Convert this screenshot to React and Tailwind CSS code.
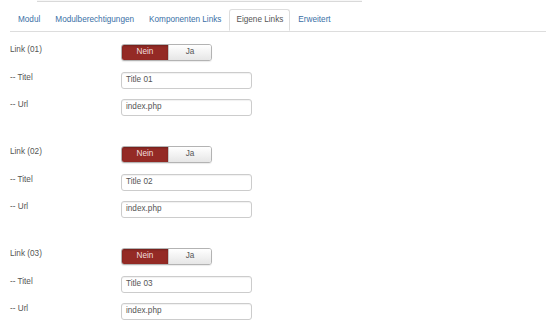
import React from "react";

const tabs = ["Modul", "Modulberechtigungen", "Komponenten Links", "Eigene Links", "Erweitert"];

function Toggle() {
  return (
    <div className="flex h-[17px] w-[91px] rounded-[3px] overflow-hidden border border-[#b3b3b3] shadow-[0_1px_1px_rgba(0,0,0,0.08)]">
      <div className="w-[46px] h-full flex items-center justify-center bg-[#942a25] text-[#f1dede] shadow-[inset_0_1px_2px_rgba(0,0,0,0.25)]">Nein</div>
      <div className="flex-1 h-full flex items-center justify-center bg-gradient-to-b from-white to-[#e6e6e6] text-[#555] border-l border-[#c4c4c4]">Ja</div>
    </div>
  );
}

function Input({ value }) {
  return (
    <div className="w-[131px] h-[17px] border border-[#cccccc] rounded-[3px] pl-[4px] flex items-center text-[#555] bg-white shadow-[inset_0_1px_1px_rgba(0,0,0,0.06)]">
      {value}
    </div>
  );
}

const labelCls = "w-[121px] shrink-0 pl-[10px] pt-[1px] leading-[10px] text-[#555]";

function Group({ n, last }) {
  return (
    <div>
      <div className="flex items-start mb-[11px]">
        <div className={labelCls}>Link ({n})</div>
        <Toggle />
      </div>
      <div className="flex items-start mb-[10px]">
        <div className={labelCls}>-- Titel</div>
        <Input value={`Title ${n}`} />
      </div>
      <div className={last ? "flex items-start" : "flex items-start mb-[30px]"}>
        <div className={labelCls}>-- Url</div>
        <Input value="index.php" />
      </div>
    </div>
  );
}

export default function App() {
  return (
    <div className="w-[546px] h-[328px] bg-white overflow-hidden text-[8.2px] font-['Liberation_Sans',Arial,sans-serif]">
      <div className="ml-[37px] w-[325px] h-[2px] border-b border-[#d9d9d9] bg-[#f7f7f7]"></div>
      <div className="mt-[7px] ml-[10px] flex border-b border-[#dddddd] pl-px">
        {tabs.map((t) => {
          const active = t === "Eigene Links";
          return active ? (
            <div key={t} className="h-[22px] px-[6px] mr-px flex items-center border border-[#dddddd] border-b-white -mb-px bg-white rounded-t-[3px] text-[#555]">
              {t}
            </div>
          ) : (
            <div key={t} className="h-[22px] px-[7px] mr-px flex items-center text-[#3a6fa6]">
              {t}
            </div>
          );
        })}
      </div>
      <div className="pt-[12px]">
        <Group n="01" />
        <Group n="02" />
        <Group n="03" last />
      </div>
    </div>
  );
}
